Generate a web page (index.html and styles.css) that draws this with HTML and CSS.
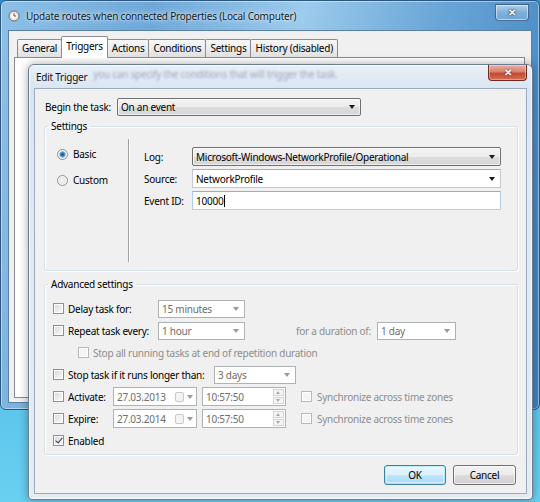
FILE: index.html
```html
<!DOCTYPE html>
<html>
<head>
<meta charset="utf-8">
<title>Edit Trigger</title>
<link rel="stylesheet" href="styles.css">
</head>
<body>
<div class="desktop">
  <div class="outer">
    <div class="otitle">
      <svg class="appicon" width="12" height="12" viewBox="0 0 12 12">
        <circle cx="6" cy="6" r="5" fill="#f2f2f2" stroke="#6b6b6b" stroke-width="1"/>
        <circle cx="6" cy="6" r="3.3" fill="#fff" stroke="#c9c9c9" stroke-width="0.6"/>
        <path d="M6 3.4V6H8" stroke="#9b2d1a" stroke-width="1" fill="none"/>
      </svg>
      <span class="otext">Update routes when connected Properties (Local Computer)</span>
      <div class="oclose">&#x2715;</div>
    </div>
    <div class="oclient">
      <div class="tabs">
        <div class="tab">General</div>
        <div class="tab sel">Triggers</div>
        <div class="tab">Actions</div>
        <div class="tab">Conditions</div>
        <div class="tab">Settings</div>
        <div class="tab">History (disabled)</div>
      </div>
      <div class="panel"></div>
    </div>
  </div>

  <div class="dialog">
    <div class="dtitle">
      <span class="dtext">Edit Trigger</span>
      <span class="ghost">you can specify the conditions that will trigger the task.</span>
      <div class="rclose">&#x2715;</div>
    </div>
    <div class="dclient">
      <div class="begin">
        <span class="lbl-begin">Begin the task:</span>
        <div class="combo w-begin"><span>On an event</span><i class="arr"></i></div>
      </div>

      <fieldset class="group">
        <legend>Settings</legend>
        <div class="settings-body">
          <div class="radios">
            <div class="ritem"><i class="radio on"></i><span>Basic</span></div>
            <div class="ritem"><i class="radio"></i><span>Custom</span></div>
          </div>
          <div class="vsep"></div>
          <div class="fields">
            <span class="flbl">Log:</span>
            <div class="combo"><span>Microsoft-Windows-NetworkProfile/Operational</span><i class="arr"></i></div>
            <span class="flbl">Source:</span>
            <div class="edit-combo"><span>NetworkProfile</span><i class="arr"></i></div>
            <span class="flbl">Event ID:</span>
            <div class="textbox focus"><span>10000</span><i class="caret"></i></div>
          </div>
        </div>
      </fieldset>

      <fieldset class="group adv">
        <legend>Advanced settings</legend>
        <div class="adv-body">
          <div class="row">
            <i class="cb"></i><span class="lbl-a">Delay task for:</span>
            <div class="dsel w-87"><span>15 minutes</span><i class="arr dis"></i></div>
          </div>
          <div class="row">
            <i class="cb"></i><span class="lbl-a">Repeat task every:</span>
            <div class="dsel w-87"><span>1 hour</span><i class="arr dis"></i></div>
            <span class="lbl-dur">for a duration of:</span>
            <div class="dsel w-79"><span>1 day</span><i class="arr dis"></i></div>
          </div>
          <div class="row indent">
            <i class="cb dis"></i><span class="gray">Stop all running tasks at end of repetition duration</span>
          </div>
          <div class="row">
            <i class="cb"></i><span class="lbl-stop">Stop task if it runs longer than:</span>
            <div class="dsel w-82"><span>3 days</span><i class="arr dis"></i></div>
          </div>
          <div class="row">
            <i class="cb"></i><span class="lbl-date">Activate:</span>
            <div class="dbox"><span>27.03.2013</span><i class="cal"></i><i class="arr dis"></i></div>
            <div class="dbox time"><span>10:57:50</span><div class="spin"><i class="up"></i><i class="dn"></i></div></div>
            <i class="cb dis sync"></i><span class="gray">Synchronize across time zones</span>
          </div>
          <div class="row">
            <i class="cb"></i><span class="lbl-date">Expire:</span>
            <div class="dbox"><span>27.03.2014</span><i class="cal"></i><i class="arr dis"></i></div>
            <div class="dbox time"><span>10:57:50</span><div class="spin"><i class="up"></i><i class="dn"></i></div></div>
            <i class="cb dis sync"></i><span class="gray">Synchronize across time zones</span>
          </div>
          <div class="row">
            <i class="cb checked"></i><span>Enabled</span>
          </div>
        </div>
      </fieldset>

      <div class="buttons">
        <div class="btn default">OK</div>
        <div class="btn">Cancel</div>
      </div>
    </div>
  </div>
</div>
</body>
</html>
```

FILE: styles.css
```css
* { box-sizing: border-box; }
html, body { margin: 0; padding: 0; }
body {
  width: 540px; height: 502px; overflow: hidden;
  font-family: "Noto Sans", "Open Sans", sans-serif;
  font-size: 10px; line-height: 14px; letter-spacing: -0.25px; color: #000;
}
.desktop {
  position: relative; width: 540px; height: 502px; overflow: hidden;
  background: linear-gradient(180deg, #2f8fcf 0%, #4cb8e6 55%, #6ad0f1 100%);
}

/* ---------- outer window ---------- */
.outer {
  position: absolute; left: 0; top: 0; width: 540px; height: 410px;
  border: 1px solid #2a5680; border-radius: 6px;
  background: linear-gradient(100deg, #8cc0e7 0%, #6ea8d9 25%, #9ccbec 50%, #6aa6d8 72%, #3f82c0 100%);
  box-shadow: inset 0 0 0 1px rgba(255,255,255,.45);
  padding: 0 7px 6px;
  display: flex; flex-direction: column;
}
.otitle { height: 29px; display: flex; align-items: center; }
.appicon { margin-right: 6px; flex: none; }
.otext { color: #101820; font-size: 10px; letter-spacing: -0.2px; text-shadow: 0 0 6px rgba(255,255,255,.9), 0 0 2px rgba(255,255,255,.8); }
.oclose {
  margin-left: auto; align-self: flex-start; margin-top: 3px; margin-right: 3px;
  width: 34px; height: 17px; border: 1px solid rgba(40,70,110,.7); border-radius: 0 0 4px 4px;
  background: linear-gradient(180deg, rgba(255,255,255,.55), rgba(200,225,245,.35) 50%, rgba(150,190,225,.4));
  box-shadow: inset 0 0 0 1px rgba(255,255,255,.5);
  color: #fff; font-size: 10px; font-weight: bold; line-height: 15px; text-align: center;
  text-shadow: 0 0 2px #234, 0 0 1px #234;
}
.oclient {
  flex: 1; background: #f0f0f0; border: 1px solid #5b7fa3;
  display: flex; flex-direction: column; padding: 4px 6px 4px 5px;
}
.tabs { display: flex; align-items: flex-end; padding-left: 3px; height: 22px; position: relative; z-index: 1; }
.tab {
  height: 18px; padding: 0 4px; border: 1px solid #898c95; border-bottom: none; margin-right: -1px;
  border-radius: 2px 2px 0 0; line-height: 17px;
  background: linear-gradient(180deg, #f7f7f7 0%, #ececec 50%, #e0e0e0 100%);
}
.tab.sel { height: 22px; background: #fff; margin-bottom: -1px; padding: 0 4px; line-height: 19px; }
.panel { flex: 1; background: #fff; border: 1px solid #898c95; }

/* ---------- edit trigger dialog ---------- */
.dialog {
  position: absolute; left: 28px; top: 64px; width: 505px; height: 436px;
  border: 1px solid #6a7c90; border-radius: 6px 6px 4px 4px;
  background: linear-gradient(180deg, #e8eff7 0%, #d9e5f2 6%, #dfe8f2 20%, #e4ebf3 100%);
  box-shadow: 0 0 10px rgba(0,0,0,.35), inset 0 0 0 1px rgba(255,255,255,.7);
  padding: 0 5px 5px;
  display: flex; flex-direction: column;
}
.dtitle { height: 23px; display: flex; align-items: center; flex: none; }
.dtext { padding-left: 2px; color: #111; flex: none; }
.ghost {
  margin-left: 6px; align-self: flex-start; margin-top: 2px;
  white-space: nowrap;
  color: rgba(70,85,105,.45); filter: blur(1.2px);
}
.rclose {
  margin-left: auto; align-self: flex-start; margin-top: 0;
  width: 39px; height: 16px; border: 1px solid #6e2a1f; border-top: none; border-radius: 0 0 4px 4px;
  background: linear-gradient(180deg, #eab0a3 0%, #d9826d 45%, #c24a32 55%, #d36e55 100%);
  box-shadow: inset 0 0 0 1px rgba(255,255,255,.35);
  color: #fff; font-size: 10px; font-weight: bold; line-height: 15px; text-align: center;
  text-shadow: 0 0 2px #5a1a10;
}
.dclient {
  flex: 1; background: #f0f0f0; border: 1px solid #9aabbd;
  display: flex; flex-direction: column;
}

.begin { display: flex; align-items: center; margin-top: 9px; padding-left: 10px; height: 18px; }
.lbl-begin { width: 72px; }

/* combobox (dropdown list) */
.combo {
  height: 19px; display: flex; align-items: center; padding: 0 5px 0 3px;
  border: 1px solid #707070; border-radius: 2px;
  background: linear-gradient(180deg, #f4f4f4 0%, #ebebeb 50%, #dddddd 51%, #d6d6d6 100%);
  box-shadow: inset 0 0 0 1px rgba(255,255,255,.6);
  white-space: nowrap;
}
.w-begin { width: 244px; height: 18px; }
.arr {
  margin-left: auto; width: 0; height: 0; flex: none;
  border-left: 3px solid transparent; border-right: 3px solid transparent; border-top: 4px solid #1a1a1a;
}
.arr.dis { border-top-color: #9a9a9a; }
.edit-combo {
  height: 19px; display: flex; align-items: center; padding: 0 5px 0 3px;
  border: 1px solid #c4cad1; border-top-color: #abadb3; background: #fff;
}
.textbox {
  height: 19px; display: flex; align-items: center; padding: 0 3px;
  border: 1px solid #b7d0e8; border-top-color: #8fb3d6; background: #fff;
}
.caret { width: 1px; height: 12px; background: #000; margin-left: 1px; }

/* group boxes */
.group {
  margin: 3px 8px 0 9px; padding: 0; min-width: 0;
  border: 1px solid #d5dfe5; border-radius: 3px;
  box-shadow: inset 1px 1px 0 #fff, 1px 1px 0 #fff;
}
.group legend { margin-left: 3px; padding: 0 3px; line-height: 14px; }
.group.adv { margin-top: 6px; }

.settings-body { display: flex; padding: 6px 16px 8px 12px; }
.radios { width: 71px; flex: none; padding-top: 8px; display: flex; flex-direction: column; gap: 12px; }
.ritem { display: flex; align-items: center; height: 14px; }
.radio {
  width: 11px; height: 11px; border-radius: 50%; border: 1px solid #8e8f8f; margin-right: 5px; flex: none;
  background: radial-gradient(circle at 50% 50%, #f6f6f6 0, #e2e4e7 60%, #cfd3d8 100%);
  box-shadow: inset 0 0 0 1px #fff;
}
.radio.on {
  background: radial-gradient(circle at 50% 50%, #0f4e86 0, #2f7fc0 1.8px, #8fc2ea 3px, #e8eef3 3.6px, #dfe2e6 100%);
}
.vsep { width: 1px; flex: none; background: #a0a0a0; box-shadow: 1px 0 0 #fff; height: 123px; }
.fields {
  flex: 1; margin-left: 15px; padding-top: 8px;
  display: grid; grid-template-columns: 48px 1fr; row-gap: 3px; align-content: start; align-items: center;
}

/* advanced */
.adv-body { padding: 8px 8px 4px 8px; display: flex; flex-direction: column; gap: 3px; }
.row { display: flex; align-items: center; height: 19px; white-space: nowrap; }
.row.indent { padding-left: 25px; }
.cb {
  width: 11px; height: 11px; border: 1px solid #8e8f8f; margin-right: 4px; flex: none; position: relative;
  background: linear-gradient(135deg, #d3d7dc 0%, #eceef0 60%, #fbfbfb 100%);
  box-shadow: inset 0 0 0 1px #fff;
}
.cb.dis { border-color: #b8b8b8; background: #f4f4f4; }
.cb.checked::after {
  content: ""; position: absolute; left: 3px; top: 0px; width: 3px; height: 6px;
  border-right: 1.5px solid #2a3a4e; border-bottom: 1.5px solid #2a3a4e; transform: rotate(40deg);
}
.gray { color: #8d8d8d; }
.lbl-a { width: 90px; }
.lbl-stop { width: 146px; }
.lbl-date { width: 45px; }
.lbl-dur { width: 81px; margin-left: 51px; color: #8d8d8d; }

.dsel {
  height: 18px; display: flex; align-items: center; padding: 0 5px 0 3px;
  border: 1px solid #adb2b5; background: #fff; color: #6d6d6d;
}
.w-87 { width: 87px; }
.w-79 { width: 79px; }
.w-82 { width: 82px; }

.dbox {
  width: 84px; height: 19px; display: flex; align-items: center; padding: 0 3px;
  border: 1px solid #adb2b5; background: #fff; color: #6d6d6d;
}
.dbox .arr { margin-left: 3px; }
.cal {
  margin-left: auto; width: 9px; height: 10px; border: 1px solid #c9c9c9; border-radius: 2px; background: #f3f3f3;
}
.dbox.time { margin-left: 5px; padding-right: 1px; }
.spin { margin-left: auto; width: 11px; height: 15px; display: flex; flex-direction: column; gap: 1px; }
.spin i { flex: 1; border: 1px solid #d4d4d4; background: #f4f4f4; position: relative; }
.spin i::after {
  content: ""; position: absolute; left: 2px; top: 1px; width: 0; height: 0;
  border-left: 2.5px solid transparent; border-right: 2.5px solid transparent;
}
.spin .up::after { border-bottom: 3px solid #a9a9a9; }
.spin .dn::after { border-top: 3px solid #a9a9a9; }
.cb.sync { margin-left: 15px; margin-right: 5px; }

/* buttons */
.buttons { display: flex; justify-content: flex-end; gap: 7px; padding-right: 10px; margin-top: 10px; }
.btn {
  width: 63px; height: 20px; text-align: center; line-height: 18px;
  border: 1px solid #707070; border-radius: 3px;
  background: linear-gradient(180deg, #f2f2f2 0%, #ebebeb 50%, #dddddd 51%, #cfcfcf 100%);
  box-shadow: inset 0 0 0 1px rgba(255,255,255,.7);
}
.btn.default {
  width: 62px; border-color: #3c7fb1;
  background: linear-gradient(180deg, #eaf6fd 0%, #d9f0fc 50%, #bee6fd 51%, #a7d9f5 100%);
  box-shadow: inset 0 0 0 1px #48d5fb55, inset 0 0 0 2px rgba(255,255,255,.5);
}
```
